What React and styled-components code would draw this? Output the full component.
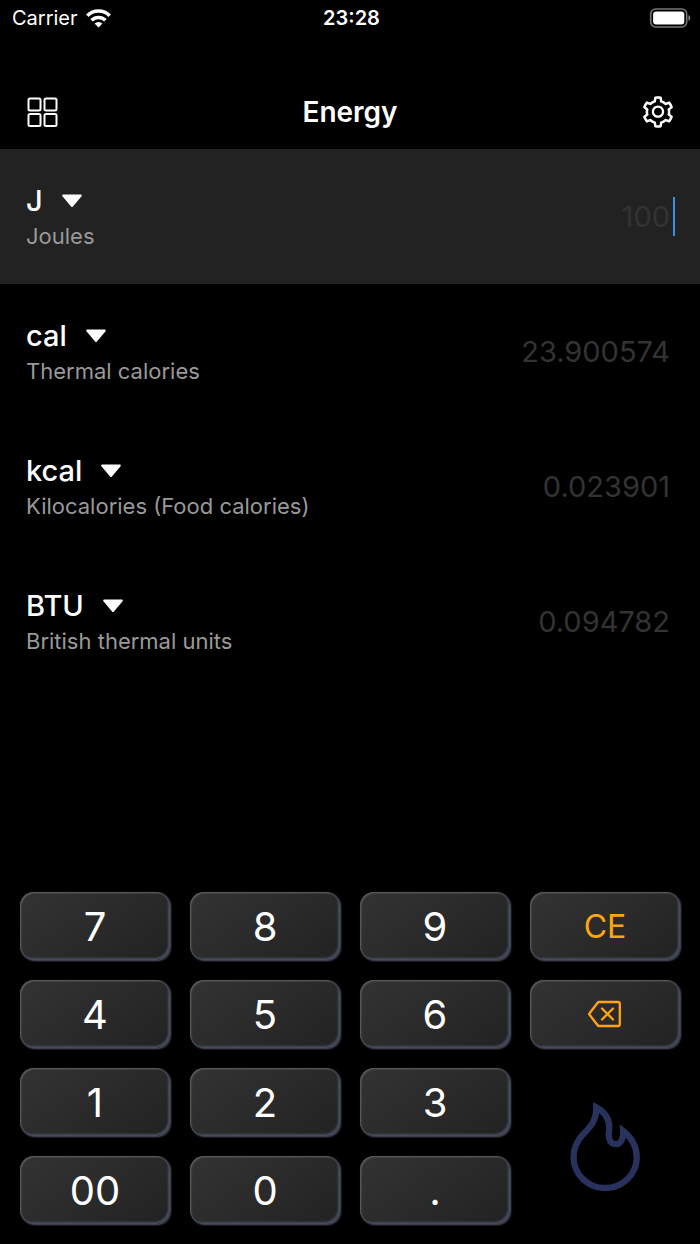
import React, { useState } from 'react'
import styled, { createGlobalStyle } from 'styled-components'
import { AiOutlineSetting } from 'react-icons/ai'

const GlobalStyle = createGlobalStyle`
  * {
    box-sizing: border-box;
  }

  body {
    margin: 0;
    background: #000;
    color: #fff;
    font-family: 'Inter', 'Liberation Sans', sans-serif;
  }

  button, input, select {
    margin: 0;
    padding: 0;
    border: 0;
    background: none;
    color: inherit;
    font: inherit;
  }
`

const Screen = styled.div`
  display: flex;
  flex-direction: column;
  min-height: 100vh;
`

const StatusBar = styled.div`
  display: grid;
  grid-template-columns: 1fr auto 1fr;
  align-items: center;
  height: 36px;
  padding: 0 9px 0 12px;
  font-size: 20px;
`

const Carrier = styled.div`
  display: flex;
  align-items: center;
  gap: 8px;
`

const Clock = styled.time`
  font-weight: 600;
`

const Battery = styled.svg`
  justify-self: end;
`

const Header = styled.header`
  display: flex;
  align-items: center;
  justify-content: space-between;
  height: 113px;
  padding: 38px 24px 0;
`

const Title = styled.h1`
  margin: 0;
  font-size: 28px;
  font-weight: 600;
`

const IconButton = styled.button`
  display: flex;
  font-size: 36px;
  cursor: pointer;
`

const Rows = styled.main`
  flex: 1;
`

const Row = styled.section`
  display: flex;
  align-items: center;
  justify-content: space-between;
  height: 135px;
  padding: 0 25px 0 26px;
  background: ${({ $active }) => ($active ? '#222' : 'transparent')};
`

const Unit = styled.div`
  padding-bottom: 2px;
`

const UnitPicker = styled.label`
  display: flex;
  align-items: center;
  gap: 19px;
  height: 40px;
  font-size: 29px;
  font-weight: 500;

  svg {
    pointer-events: none;
  }
`

const UnitSelect = styled.select`
  appearance: none;
  field-sizing: content;
  outline: none;

  option {
    background: #222;
  }
`

const UnitName = styled.div`
  font-size: 22px;
  line-height: 30px;
  white-space: nowrap;
  color: #999;
`

const Field = styled.div`
  display: flex;
  flex: 1;
  align-items: center;
  gap: 3px;
  min-width: 0;
`

const Value = styled.input`
  flex: 1;
  min-width: 0;
  text-align: right;
  font-size: 29px;
  outline: none;

  &::placeholder {
    color: #333;
    opacity: 1;
  }
`

const Caret = styled.span`
  width: 2px;
  height: 39px;
  background: ${({ $visible }) => ($visible ? '#3f8fe0' : 'transparent')};
`

const Keypad = styled.div`
  display: grid;
  grid-template-columns: repeat(4, 1fr);
  grid-auto-rows: 68px;
  gap: 20px;
  padding: 20px;
`

const Key = styled.button`
  display: flex;
  align-items: center;
  justify-content: center;
  border-radius: 14px;
  background: linear-gradient(145deg, #333, #222);
  box-shadow: 1px 1px 2px #50566a, inset 1px 1px 2px #666, inset -2px -2px 2px #484d5e;
  color: ${({ $accent }) => ($accent ? '#ffa50f' : '#fff')};
  font-size: ${({ $accent }) => ($accent ? '32px' : '40px')};
  cursor: pointer;
`

const Flame = styled.svg`
  grid-column: 4;
  grid-row: 3 / span 2;
  place-self: center;
`

const units = {
  J: { name: 'Joules', joules: 1 },
  cal: { name: 'Thermal calories', joules: 4.184 },
  kcal: { name: 'Kilocalories (Food calories)', joules: 4184 },
  BTU: { name: 'British thermal units', joules: 1055.05585 },
}

const keys = ['7', '8', '9', 'CE', '4', '5', '6', 'DEL', '1', '2', '3', '00', '0', '.']

const convert = (amount, from, to) => {
  const result = (Number(amount) * units[from].joules) / units[to].joules
  return String(Number(result.toFixed(6)))
}

function WifiIcon() {
  return (
    <svg width="25" height="19" viewBox="0 0 76 57" fill="none" stroke="#fff" strokeWidth="11" aria-hidden="true">
      <path d="M4 20a48 48 0 0 1 68 0" />
      <path d="M17 34a30 30 0 0 1 42 0" />
      <path d="M38 56L26 44a17 17 0 0 1 24 0z" fill="#fff" stroke="none" />
    </svg>
  )
}

function GridIcon() {
  return (
    <svg width="36" height="36" viewBox="0 0 36 36" fill="none" stroke="#fff" strokeWidth="2" aria-hidden="true">
      <rect x="4.5" y="4.5" width="12" height="12" rx="1.5" />
      <rect x="20.5" y="4.5" width="12" height="12" rx="1.5" />
      <rect x="4.5" y="20" width="12" height="12" rx="1.5" />
      <rect x="20.5" y="20" width="12" height="12" rx="1.5" />
    </svg>
  )
}

function DownIcon() {
  return (
    <svg width="20" height="14" viewBox="0 0 20 14" fill="#fff" stroke="#fff" strokeWidth="2" strokeLinejoin="round" aria-hidden="true">
      <path d="M1.2 1.6h17.6L10 12z" />
    </svg>
  )
}

function BackspaceIcon() {
  return (
    <svg
      width="34"
      height="28"
      viewBox="0 0 34 28"
      fill="none"
      stroke="currentColor"
      strokeWidth="2.3"
      strokeLinecap="round"
      strokeLinejoin="round"
      aria-hidden="true"
    >
      <path d="M1 14L9.600 2.800q.6-.8 1.600-.8H30q1.800 0 1.800 1.800v20.400q0 1.800-1.800 1.800H11.200q-1 0-1.600-.8z" />
      <path d="M14 8.500l11 11M25 8.500l-11 11" />
    </svg>
  )
}

function App() {
  const [amount, setAmount] = useState('')
  const [active, setActive] = useState(0)
  const [selected, setSelected] = useState(['J', 'cal', 'kcal', 'BTU'])

  const changeUnit = (index, unit) =>
    setSelected(selected.map((u, i) => (i === index ? unit : u)))

  const press = (key) => {
    if (key === 'CE') return setAmount('')
    if (key === 'DEL') return setAmount(amount.slice(0, -1))
    if (key === '.' && amount.includes('.')) return
    setAmount(amount + key)
  }

  const valueFor = (source, index) =>
    index === active ? source : convert(source, selected[active], selected[index])

  return (
    <Screen>
      <GlobalStyle />

      <StatusBar>
        <Carrier>
          Carrier
          <WifiIcon />
        </Carrier>
        <Clock>23:28</Clock>
        <Battery width="42" height="20" viewBox="0 0 42 20" aria-hidden="true">
          <rect x="1.7" y="1" width="36" height="18" rx="5" fill="none" stroke="#777" strokeWidth="1.6" />
          <rect x="4.1" y="3.4" width="31.2" height="13.2" rx="3" fill="#fff" />
          <path d="M39.5 7a3.4 3.4 0 0 1 0 6z" fill="#888" />
        </Battery>
      </StatusBar>

      <Header>
        <IconButton aria-label="Categories">
          <GridIcon />
        </IconButton>
        <Title>Energy</Title>
        <IconButton aria-label="Settings">
          <AiOutlineSetting />
        </IconButton>
      </Header>

      <Rows>
        {selected.map((unit, index) => (
          <Row key={index} $active={index === active} onClick={() => setActive(index)}>
            <Unit>
              <UnitPicker>
                <UnitSelect
                  aria-label="Unit"
                  value={unit}
                  onChange={(e) => changeUnit(index, e.target.value)}
                >
                  {Object.keys(units).map((u) => (
                    <option key={u}>{u}</option>
                  ))}
                </UnitSelect>
                <DownIcon />
              </UnitPicker>
              <UnitName>{units[unit].name}</UnitName>
            </Unit>
            <Field>
              <Value
                aria-label={units[unit].name}
                readOnly
                placeholder={valueFor('100', index)}
                value={amount && valueFor(amount, index)}
              />
              <Caret $visible={index === active} />
            </Field>
          </Row>
        ))}
      </Rows>

      <Keypad>
        {keys.map((key) => (
          <Key
            key={key}
            $accent={key === 'CE' || key === 'DEL'}
            aria-label={key === 'DEL' ? 'Delete' : undefined}
            onClick={() => press(key)}
          >
            {key === 'DEL' ? <BackspaceIcon /> : key}
          </Key>
        ))}
        <Flame width="70" height="90" viewBox="91 65 209 271" aria-hidden="true">
          <path
            d="M169 84C170 128 148 146 127 168C109 188 101 209 101 234a95 93 0 0 0 190 0C291 200 272 172 250 155C251 180 243 195 229 195C213 195 205 182 207 160C212 130 203 102 169 84Z"
            fill="none"
            stroke="#28325c"
            strokeWidth="19"
            strokeMiterlimit="10"
          />
        </Flame>
      </Keypad>
    </Screen>
  )
}

export default App
